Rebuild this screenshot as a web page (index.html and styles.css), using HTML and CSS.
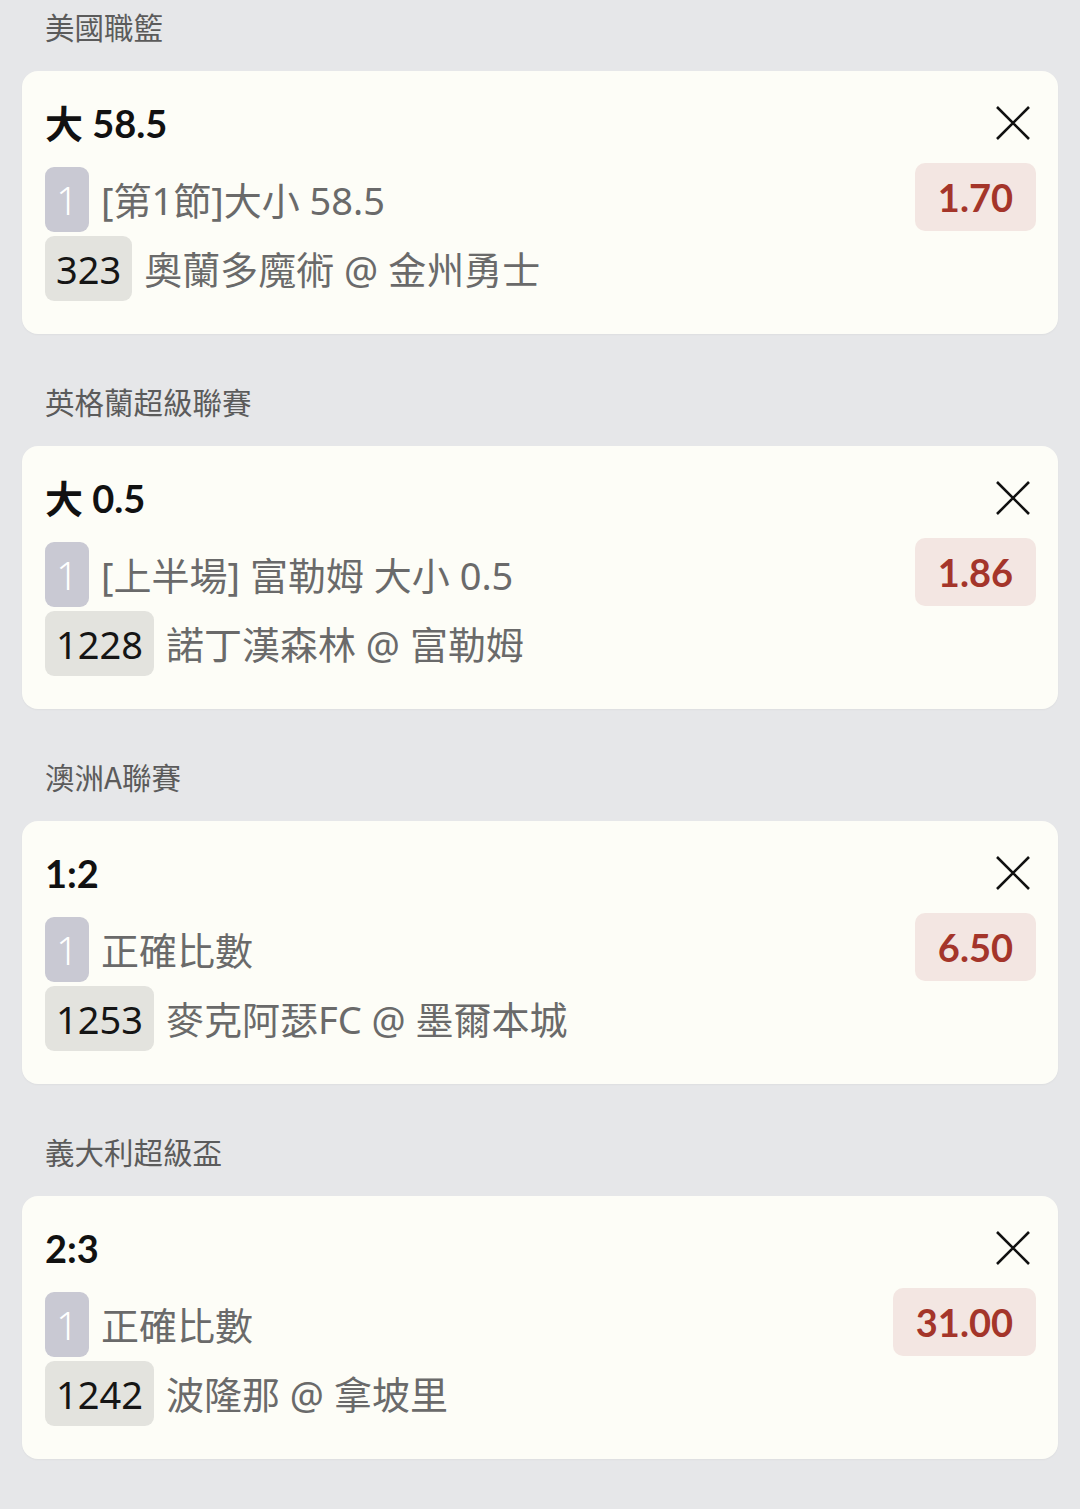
FILE: index.html
```html
<!DOCTYPE html>
<html lang="zh-Hant">
<head>
<meta charset="utf-8">
<link rel="stylesheet" href="styles.css">
</head>
<body>
<main class="slip">
  <section class="league">
    <h2 class="league-name">美國職籃</h2>
    <div class="bet-card">
      <div class="bet-head">
        <div class="bet-title">大 58.5</div>
        <button class="close" aria-label="移除"><svg viewBox="0 0 34 34" width="34" height="34"><path d="M1 1 L33 33 M33 1 L1 33" stroke="#111" stroke-width="2.6" fill="none"/></svg></button>
      </div>
      <div class="bet-body">
        <div class="bet-lines">
          <div class="line"><span class="tag tag-period">1</span><span class="line-text">[第1節]大小 58.5</span></div>
          <div class="line"><span class="tag tag-num">323</span><span class="line-text">奧蘭多魔術 @ 金州勇士</span></div>
        </div>
        <div class="odds">1.70</div>
      </div>
    </div>
  </section>

  <section class="league">
    <h2 class="league-name">英格蘭超級聯賽</h2>
    <div class="bet-card">
      <div class="bet-head">
        <div class="bet-title">大 0.5</div>
        <button class="close" aria-label="移除"><svg viewBox="0 0 34 34" width="34" height="34"><path d="M1 1 L33 33 M33 1 L1 33" stroke="#111" stroke-width="2.6" fill="none"/></svg></button>
      </div>
      <div class="bet-body">
        <div class="bet-lines">
          <div class="line"><span class="tag tag-period">1</span><span class="line-text">[上半場] 富勒姆 大小 0.5</span></div>
          <div class="line"><span class="tag tag-num">1228</span><span class="line-text">諾丁漢森林 @ 富勒姆</span></div>
        </div>
        <div class="odds">1.86</div>
      </div>
    </div>
  </section>

  <section class="league">
    <h2 class="league-name">澳洲A聯賽</h2>
    <div class="bet-card">
      <div class="bet-head">
        <div class="bet-title">1:2</div>
        <button class="close" aria-label="移除"><svg viewBox="0 0 34 34" width="34" height="34"><path d="M1 1 L33 33 M33 1 L1 33" stroke="#111" stroke-width="2.6" fill="none"/></svg></button>
      </div>
      <div class="bet-body">
        <div class="bet-lines">
          <div class="line"><span class="tag tag-period">1</span><span class="line-text">正確比數</span></div>
          <div class="line"><span class="tag tag-num">1253</span><span class="line-text">麥克阿瑟FC @ 墨爾本城</span></div>
        </div>
        <div class="odds">6.50</div>
      </div>
    </div>
  </section>

  <section class="league">
    <h2 class="league-name">義大利超級盃</h2>
    <div class="bet-card">
      <div class="bet-head">
        <div class="bet-title">2:3</div>
        <button class="close" aria-label="移除"><svg viewBox="0 0 34 34" width="34" height="34"><path d="M1 1 L33 33 M33 1 L1 33" stroke="#111" stroke-width="2.6" fill="none"/></svg></button>
      </div>
      <div class="bet-body">
        <div class="bet-lines">
          <div class="line"><span class="tag tag-period">1</span><span class="line-text">正確比數</span></div>
          <div class="line"><span class="tag tag-num">1242</span><span class="line-text">波隆那 @ 拿坡里</span></div>
        </div>
        <div class="odds">31.00</div>
      </div>
    </div>
  </section>
</main>
</body>
</html>
```

FILE: styles.css
```css
* { box-sizing: border-box; }

html, body {
  margin: 0;
  padding: 0;
  background: #e6e7e9;
}

body {
  font-family: "Noto Sans", "Noto Sans CJK TC", sans-serif;
  width: 1080px;
  min-height: 1509px;
}

.slip {
  padding: 0 22px 0 22px;
}

.league {
  margin-bottom: 41px;
}

.league-name {
  margin: 0 0 17px 23px;
  height: 54px;
  line-height: 52px;
  font-family: "Noto Sans CJK TC", sans-serif;
  font-size: 29.5px;
  font-weight: 400;
  color: #5b5b5b;
}

.bet-card {
  background: #fdfdf7;
  border-radius: 16px;
  height: 263px;
  padding: 30px 22px 0 23px;
  box-shadow: 0 1px 2px rgba(0,0,0,0.04);
}

.bet-head {
  display: flex;
  justify-content: space-between;
  align-items: center;
  height: 44px;
}

.bet-title {
  font-family: "Lato", "Noto Sans CJK TC", sans-serif;
  font-weight: 700;
  font-size: 38px;
  color: #111;
  line-height: 44px;
}

.close {
  border: 0;
  background: none;
  padding: 0;
  margin-right: 6px;
  width: 34px;
  height: 34px;
  display: flex;
}

.bet-body {
  display: flex;
  justify-content: space-between;
  align-items: flex-start;
  margin-top: 22px;
}

.bet-lines {
  display: flex;
  flex-direction: column;
  gap: 4px;
}

.line {
  display: flex;
  align-items: center;
  gap: 12px;
  height: 65px;
}

.tag {
  height: 65px;
  border-radius: 9px;
  display: flex;
  align-items: center;
  justify-content: center;
  font-size: 38px;
  line-height: 1;
}

.tag-period {
  width: 44px;
  background: #c9c9d3;
  color: #fff;
  font-weight: 300;
}

.tag-num {
  padding: 0 11px;
  background: #e3e3de;
  color: #151515;
}

.line-text {
  font-size: 38px;
  font-weight: 400;
  color: #6a6a6a;
  line-height: 1;
  white-space: nowrap;
}

.odds {
  margin-top: -4px;
  height: 68px;
  padding: 0 23px;
  border-radius: 10px;
  background: #f3e6e2;
  color: #a4352a;
  font-family: "Lato", sans-serif;
  font-weight: 700;
  font-size: 38px;
  display: flex;
  align-items: center;
}
```
